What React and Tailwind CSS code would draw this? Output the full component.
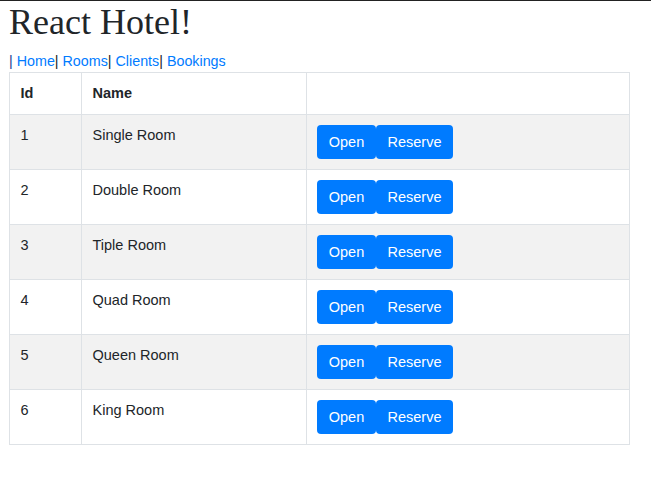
import React from 'react';

const rooms = [
  { id: 1, name: 'Single Room' },
  { id: 2, name: 'Double Room' },
  { id: 3, name: 'Tiple Room' },
  { id: 4, name: 'Quad Room' },
  { id: 5, name: 'Queen Room' },
  { id: 6, name: 'King Room' },
];

export default function App() {
  return (
    <div
      className="min-h-[482px] bg-white border-t border-[#222] text-[#212529]"
      style={{ fontFamily: '"Liberation Sans", Arial, sans-serif' }}
    >
      <div className="pl-[9px]">
        <h1
          className="text-[36px] leading-[43px] mb-[7px] font-normal"
          style={{ fontFamily: '"Liberation Serif", "Times New Roman", serif' }}
        >
          React Hotel!
        </h1>
        <nav className="text-[14.3px] leading-[21px]">
          <span className="text-[#1a3d8f]">|</span>
          <a className="text-[#007bff]"> Home</a>|<a className="text-[#007bff]"> Rooms</a>|
          <a className="text-[#007bff]"> Clients</a>|<a className="text-[#007bff]"> Bookings</a>
        </nav>
        <table className="w-[621px] table-fixed border-collapse text-[14.5px] leading-[21px]">
          <colgroup>
            <col className="w-[72px]" />
            <col className="w-[225px]" />
            <col />
          </colgroup>
          <thead>
            <tr>
              <th className="border border-[#dee2e6] px-[10.5px] py-[10px] text-left font-bold">Id</th>
              <th className="border border-[#dee2e6] px-[10.5px] py-[10px] text-left font-bold">Name</th>
              <th className="border border-[#dee2e6] px-[10.5px] py-[10px]"></th>
            </tr>
          </thead>
          <tbody>
            {rooms.map((r, i) => (
              <tr key={r.id} className={i % 2 === 0 ? 'bg-[#f2f2f2]' : 'bg-white'}>
                <td className="border border-[#dee2e6] px-[10.5px] py-[10px] align-top">{r.id}</td>
                <td className="border border-[#dee2e6] px-[10.5px] py-[10px] align-top">{r.name}</td>
                <td className="border border-[#dee2e6] pl-[10px] pr-[10.5px] py-[10px] align-top">
                  <div className="flex">
                    <button className="h-[34px] w-[59px] pb-[1px] rounded-[4px] bg-[#007bff] text-white text-[14.5px] leading-[20px] flex items-center justify-center">
                      Open
                    </button>
                    <button className="h-[34px] w-[77px] pb-[1px] rounded-[4px] bg-[#007bff] text-white text-[14.5px] leading-[20px] flex items-center justify-center">
                      Reserve
                    </button>
                  </div>
                </td>
              </tr>
            ))}
          </tbody>
        </table>
      </div>
    </div>
  );
}
